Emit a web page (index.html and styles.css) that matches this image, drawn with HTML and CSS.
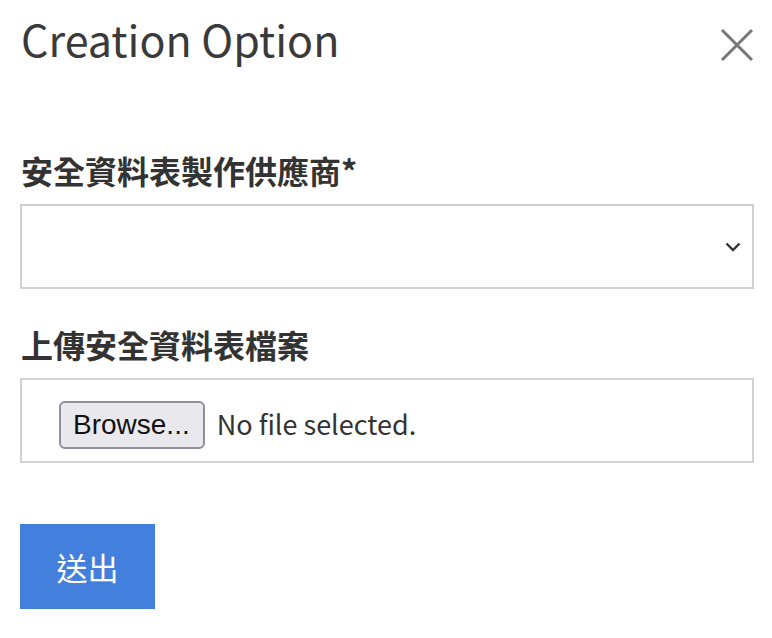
FILE: index.html
```html
<!DOCTYPE html>
<html lang="zh-Hant">
<head>
<meta charset="utf-8">
<link rel="stylesheet" href="styles.css">
</head>
<body>
<div class="modal">
  <div class="header">
    <h1 class="title">Creation Option</h1>
    <button class="close" aria-label="close">
      <svg width="34" height="34" viewBox="0 0 34 34"><path d="M2 2 L32 32 M32 2 L2 32" stroke="#777" stroke-width="3" fill="none"/></svg>
    </button>
  </div>
  <form class="form">
    <div class="field">
      <label class="label">安全資料表製作供應商*</label>
      <div class="select">
        <svg class="chev" width="16" height="10" viewBox="0 0 16 10"><path d="M1.5 1.5 L8 8 L14.5 1.5" stroke="#333" stroke-width="2.4" fill="none"/></svg>
      </div>
    </div>
    <div class="field">
      <label class="label">上傳安全資料表檔案</label>
      <div class="file">
        <span class="browse">Browse...</span>
        <span class="nofile">No file selected.</span>
      </div>
    </div>
    <div class="actions">
      <span class="submit">送出</span>
    </div>
  </form>
</div>
</body>
</html>
```
FILE: styles.css
```css
html, body { margin: 0; padding: 0; background: #fff; }
body { font-family: "Noto Sans CJK TC", "Noto Sans", sans-serif; color: #333; }
.modal { padding: 0 18px 0 20px; }
.header { display: flex; justify-content: space-between; align-items: flex-start; height: 100px; }
.title { margin: 11px 0 0 1px; font-size: 43px; font-weight: 400; line-height: 54px; color: #3a3a3a; }
.close { border: 0; background: none; padding: 0; margin-top: 28px; width: 34px; height: 34px; }
.close svg { display: block; }
.form { display: flex; flex-direction: column; }
.field { display: flex; flex-direction: column; }
.label { font-size: 32px; font-weight: 700; line-height: 40px; margin: 50px 0 14px 1px; color: #333; }
.field + .field .label { margin-top: 35px; }
.select { height: 81px; border: 2px solid #d2d2d2; border-top-color: #cfcfcf; display: flex; align-items: center; justify-content: flex-end; padding-right: 11px; }
.file { height: 81px; border: 2px solid #d2d2d2; display: flex; align-items: center; padding-left: 37px; }
.browse { font-family: "Liberation Sans", Arial, sans-serif; font-size: 28px; color: #111; background: #e9e9ed; border: 2px solid #8f8f9d; border-radius: 6px; height: 44px; line-height: 44px; padding: 0 13px 0 12px; margin-top: 8px; }
.nofile { font-size: 27px; margin-left: 12px; color: #333; margin-top: 6px; }
.actions { margin-top: 61px; display: flex; }
.submit { width: 135px; height: 85px; background: #4380dd; color: #fff; font-size: 31px; display: flex; align-items: center; justify-content: center; }
```
